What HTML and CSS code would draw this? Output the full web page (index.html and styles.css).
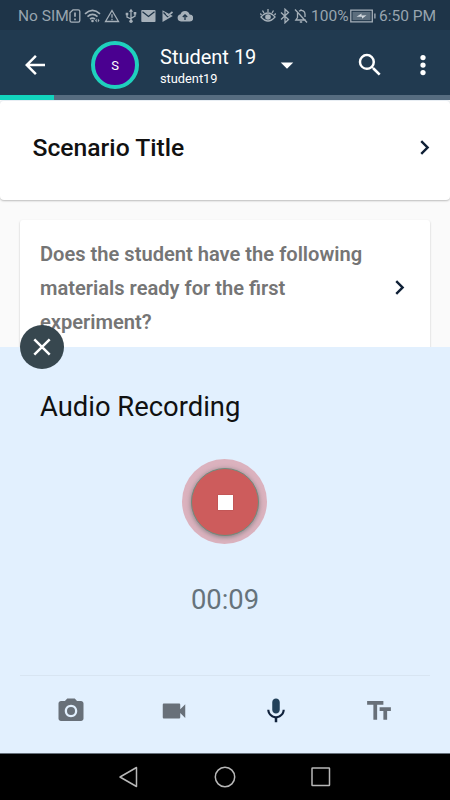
FILE: index.html
```html
<!DOCTYPE html>
<html lang="en">
<head>
<meta charset="utf-8">
<title>Audio Recording</title>
<link rel="stylesheet" href="styles.css">
</head>
<body>
<div class="screen">
  <div class="status">
    <div class="status-left">
      <span class="carrier">No SIM</span>
      <svg width="12" height="16" viewBox="0 0 12 16"><path class="line" d="M4 1.800h5.200a1.600 1.600 0 0 1 1.600 1.600v9.200a1.600 1.600 0 0 1-1.600 1.600H2.600A1.600 1.600 0 0 1 1 12.600V4.800z"/><path class="line thick" d="M6 4.500v4.300M6 10.500v1.700"/></svg>
      <svg width="18" height="16" viewBox="0 0 18 16"><path class="line thick" d="M1 5.800q7.500-6.800 15 0M3.500 8.600q5-4.400 10 0M6 11.200q2.500-2.200 5 0"/><circle cx="8.500" cy="13" r="1.300"/><path d="M11 12.500l1.700-2v4zM13.800 10.500l1.700 2-1.700 2z"/></svg>
      <svg width="16" height="16" viewBox="0 0 16 16"><path class="line" d="M8 2.500L14.500 13.500H1.500z"/><path class="line" d="M8 6.300v3.500M8 10.800v1.500"/></svg>
      <svg width="12" height="16" viewBox="0 0 12 16"><path class="line" d="M6 3v10M2 6v3l4 2M10 5.500v2.700L6 10.300"/><path d="M6 .8l2.200 3H3.800zM.7 4.700h2.600v2.600H.7zM8.700 4h2.600v2.600H8.700z"/><circle cx="6" cy="13.300" r="1.700"/></svg>
      <svg width="15" height="16" viewBox="0 0 15 16"><rect x=".3" y="2" width="14.200" height="12" rx=".8"/><path class="cut" d="M1.500 3.800l6 4.700 6-4.700"/></svg>
      <svg width="13" height="16" viewBox="0 0 13 16"><path d="M1.500 2.300L11.800 8 1.500 14z"/><path class="cut" d="M2.500 4.500l4 4L12 3.500"/><path class="line thick" d="M5.500 5.800l1.800 1.500L11.500 4"/></svg>
      <svg width="16" height="16" viewBox="0 0 16 16"><path d="M4 13.500a3.700 3.700 0 0 1-.5-7.300A4.800 4.800 0 0 1 12.600 6.500a3.500 3.500 0 0 1 .2 7z"/><path class="cut" d="M8 12V7M5.800 9L8 6.800 10.200 9"/></svg>
    </div>
    <div class="status-right">
      <svg width="16" height="16" viewBox="0 0 16 16"><path class="line" d="M1 9q7-8 14 0q-7 8-14 0zM8 4V1M4 5L2.500 2.500M12 5l1.500-2.500M1.500 7L.3 5.500M14.500 7l1.200-1.500"/><circle cx="8" cy="9" r="2.800"/></svg>
      <svg class="bt" width="10" height="16" viewBox="0 0 10 16"><path class="line" d="M1 4.500l7.500 7L5 14.800V1.200l3.500 3.300L1 11.500"/></svg>
      <svg class="bell" width="14" height="16" viewBox="0 0 14 16"><path class="line" d="M3.500 5v4.500L1.800 12h10M5 3.200C8 1 11 3.500 11 6v3M7 2.600V1.200M5.800 14h2.400M1 1.500l12 13"/></svg>
      <span class="percent">100%</span>
      <svg class="batt" width="26" height="14" viewBox="0 0 26 14"><path class="line" d="M.8 1.200h21.500v11.600H.8zM24.900 4.500v5"/><path class="charge" d="M2.500 2.800h18v8.400h-18z"/><path class="bolt" d="M6.500 7.700L11.500 4.500v2l5-.2L12 9.700v-2z"/></svg>
      <span class="clock">6:50 PM</span>
    </div>
  </div>
  <header class="appbar">
    <svg class="icon back" viewBox="0 0 24 24"><path d="M20 11H7.830l5.590-5.590L12 4l-8 8 8 8 1.410-1.410L7.830 13H20v-2z"/></svg>
    <div class="avatar">S</div>
    <div class="who"><div class="name">Student 19</div><div class="login">student19</div></div>
    <svg class="icon caret" viewBox="0 0 24 24"><path d="M7 10l5 5 5-5z"/></svg>
    <svg class="icon search" viewBox="0 0 24 24"><path d="M15.500 14h-.79l-.28-.27A6.471 6.471 0 0 0 16 9.500 6.500 6.500 0 1 0 9.500 16c1.610 0 3.090-.59 4.230-1.570l.27.28v.79l5 4.990L20.490 19l-4.990-5zm-6 0C7.010 14 5 11.990 5 9.500S7.010 5 9.500 5 14 7.010 14 9.500 11.990 14 9.500 14z"/></svg>
    <svg class="icon more" viewBox="0 0 24 24"><circle cx="12" cy="6" r="2.100"/><circle cx="12" cy="12" r="2.100"/><circle cx="12" cy="18" r="2.100"/></svg>
  </header>
  <div class="progress"><div class="progress-fill"></div></div>
  <main class="content">
    <section class="scenario">
      <h1>Scenario Title</h1>
      <svg class="chevron" viewBox="0 0 24 24"><path d="M10 6L8.590 7.410 13.170 12l-4.580 4.590L10 18l6-6z"/></svg>
    </section>
    <section class="question">
      <p>Does the student have the following materials ready for the first experiment?</p>
      <svg class="chevron" viewBox="0 0 24 24"><path d="M10 6L8.590 7.410 13.170 12l-4.580 4.590L10 18l6-6z"/></svg>
    </section>
  </main>
  <section class="panel">
    <div class="close"><svg width="44" height="44" viewBox="0 0 44 44"><path d="M14.300 14.300l15.400 15.400M29.700 14.300L14.300 29.700"/></svg></div>
    <h2>Audio Recording</h2>
    <div class="halo"><div class="record"><div class="stop"></div></div></div>
    <div class="timer">00:09</div>
    <div class="tabs">
      <svg class="icon" viewBox="0 0 24 24"><circle cx="12" cy="12" r="3.200"/><path d="M9 2L7.170 4H4c-1.100 0-2 .9-2 2v12c0 1.100.9 2 2 2h16c1.100 0 2-.9 2-2V6c0-1.100-.9-2-2-2h-3.170L15 2H9zm3 15c-2.760 0-5-2.240-5-5s2.240-5 5-5 5 2.240 5 5-2.240 5-5 5z"/></svg>
      <svg class="icon" viewBox="0 0 24 24"><path d="M17 10.500V7c0-.55-.45-1-1-1H4c-.55 0-1 .45-1 1v10c0 .55.45 1 1 1h12c.55 0 1-.45 1-1v-3.500l4 4v-11l-4 4z"/></svg>
      <svg class="icon active" viewBox="0 0 24 24"><path class="mic" d="M12 14c1.660 0 2.990-1.340 2.990-3L15 5c0-1.660-1.340-3-3-3S9 3.340 9 5v6c0 1.660 1.340 3 3 3z"/><path d="M17.300 11c0 3-2.540 5.100-5.300 5.100S6.700 14 6.700 11H5c0 3.410 2.720 6.230 6 6.720V21h2v-3.280c3.280-.48 6-3.300 6-6.720h-1.700z"/></svg>
      <svg class="icon" viewBox="0 0 24 24"><path d="M2.500 4v3h5v12h3V7h5V4h-13zm19 5h-9v3h3v7h3v-7h3V9z"/></svg>
    </div>
  </section>
  <nav class="navbar">
    <svg viewBox="0 0 22 24"><path d="M18.500 2.500v19L2 12z"/></svg>
    <svg viewBox="0 0 22 24"><circle cx="11" cy="12" r="9.700"/></svg>
    <svg viewBox="0 0 22 24"><rect x="2" y="3" width="17.500" height="17.500" rx=".5"/></svg>
  </nav>
</div>
</body>
</html>
```
FILE: styles.css
```css
* { box-sizing: border-box; }
body { margin: 0; font-family: Roboto, "Liberation Sans", sans-serif; }
h1, h2, p { margin: 0; }
svg { display: block; flex: none; }
.screen { width: 450px; height: 800px; overflow: hidden; display: flex; flex-direction: column; background: #fafafa; }

.status { height: 30px; flex: none; background: #1e3448; color: #98a4af; display: flex; justify-content: space-between; padding: 1px 15px 0 18px; font-size: 15.500px; white-space: nowrap; }
.status-left, .status-right { display: flex; align-items: center; }
.status svg { fill: #a6b0b9; }
.status .line { fill: none; stroke: #a6b0b9; stroke-width: 1.300; }
.status .thick { stroke-width: 1.700; }
.status .cut { fill: none; stroke: #1e3448; stroke-width: 1.300; }
.carrier { width: 50px; }
.status-left { gap: 4px; }
.status-left .carrier { margin-right: -3px; }
.status-left svg:nth-of-type(1) { margin-right: -1px; }
.status-left svg:nth-of-type(2) { margin-right: -2px; }
.status-left svg:nth-of-type(4) { margin-left: 1px; }
.status-left svg:nth-of-type(6) { margin-left: 1px; }
.status-left svg:nth-of-type(7) { margin-left: -1px; }
.bt { margin-left: 4px; }
.bell { margin-left: 4px; }
.percent { width: 37px; margin-left: 3px; }
.batt { margin-left: 2px; }
.status .charge { fill: #5d6e7d; }
.status .bolt { fill: #d3d9de; }
.clock { width: 56px; margin-left: 3px; text-align: right; }

.appbar { height: 65px; flex: none; background: #213a50; color: #fff; display: flex; align-items: center; padding: 5px 12px 0 20px; }
.icon { width: 30px; height: 30px; fill: #fff; }
.avatar { width: 48px; height: 48px; margin-left: 41px; border: 4.500px solid #1fd0bd; border-radius: 50%; background: #4a0090; display: flex; align-items: center; justify-content: center; font-size: 13px; }
.who { width: 111px; margin-left: 21px; padding-top: 2px; white-space: nowrap; }
.name { font-size: 20px; line-height: 25px; }
.login { font-size: 12.800px; line-height: 18px; }
.caret { margin-left: 1px; }
.search { margin-left: 53px; }
.more { margin-left: auto; }
.progress { height: 5px; flex: none; background: #566c80; }
.progress-fill { width: 12%; height: 100%; background: #12d3bd; }

.content { height: 247px; flex: none; overflow: hidden; }
.scenario { height: 100px; background: #fff; border-top: 1px solid #e8eef4; border-radius: 4px; box-shadow: 0 1px 2px rgba(0,0,0,.25); display: flex; align-items: center; justify-content: space-between; padding: 0 11px 6px 32.500px; }
.scenario h1 { font-size: 24.700px; font-weight: 500; color: #111; }
.chevron { width: 29px; height: 29px; fill: #0f2036; }
.question { height: 160px; margin: 20px 20px 0; background: #fff; border-radius: 3px; box-shadow: 0 1px 2px rgba(0,0,0,.25); padding: 17px 16px 0 20px; display: flex; justify-content: space-between; }
.question p { width: 330px; font-size: 20.100px; line-height: 34px; font-weight: 600; color: #757575; }
.question .chevron { margin-top: 36px; }

.panel { position: relative; height: 406px; flex: none; background: #e2f0fe; display: flex; flex-direction: column; align-items: center; }
.close { position: absolute; left: 20px; top: -22px; width: 44px; height: 44px; border-radius: 50%; background: #37474f; }
.close path { fill: none; stroke: #fff; stroke-width: 2.500; }
.panel h2 { align-self: flex-start; margin: 42px 0 0 40px; font-size: 27.400px; line-height: 36px; font-weight: 400; color: #111; white-space: nowrap; }
.halo { width: 85px; height: 85px; margin: 34px 1px 0 0; border-radius: 50%; background: #dbb2be; display: flex; align-items: center; justify-content: center; }
.record { width: 68px; height: 68px; border-radius: 50%; background: #cd5c5c; border: 1px solid #6f8c7c; box-shadow: 0 1px 5px rgba(70,90,90,.6); display: flex; align-items: center; justify-content: center; }
.stop { width: 15px; height: 15px; margin: 1px 0 0 1px; background: #fff; box-shadow: 0 0 1px #8d3b3b; }
.timer { margin-top: 38px; font-size: 27.400px; line-height: 36px; color: #66737b; }
.tabs { width: 410px; margin-top: auto; height: 78px; border-top: 1px solid #d8e5f2; display: grid; grid-template-columns: repeat(4, 1fr); justify-items: center; padding-top: 20px; }
.tabs .icon { fill: #687079; }
.tabs .active { fill: #10213b; }
.active .mic { fill: #23415a; }
.navbar { height: 47px; flex: none; background: #000; border-top: 1px solid #66707a; display: flex; justify-content: center; align-items: center; gap: 74px; }
.navbar svg { width: 22px; height: 24px; fill: none; stroke: #b8b8b8; stroke-width: 1.500; stroke-linejoin: round; }
```
